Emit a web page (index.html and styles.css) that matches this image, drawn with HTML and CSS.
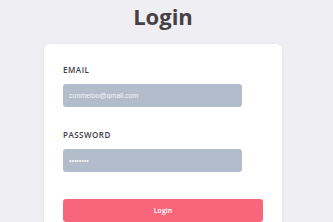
FILE: index.html
```html
<!DOCTYPE html>
<html lang="en">
<head>
    <meta charset="UTF-8">
    <meta name="viewport" content="width=device-width, initial-scale=1.0">
    <title>Login</title>
    <link rel="stylesheet" href="styles.css">
</head>
<body>
    <h1 class="title">Login</h1>
    <form class="card">
        <label class="label" for="email">EMAIL</label>
        <input class="field" id="email" type="text" value="conmeloo@gmail.com">
        <label class="label" for="password">PASSWORD</label>
        <input class="field" id="password" type="password" value="password">
        <button class="submit" type="button">Login</button>
    </form>
</body>
</html>
```

FILE: styles.css
```css
body {
    font-family: 'Open Sans', sans-serif;
    margin: 0;
    padding-right: 7px;
    background-color: #efeef3;
    display: flex;
    flex-direction: column;
    align-items: center;
    overflow: hidden;
    height: 222px;
}
.title {
    flex-shrink: 0;
    font-size: 22px;
    font-weight: 700;
    color: #454045;
    margin: 2px 0 0;
    height: 42px;
    line-height: 28px;
}
.card {
    flex-shrink: 0;
    width: 200px;
    background-color: #fff;
    border-radius: 6px;
    padding: 20px 19px 40px;
    box-shadow: 0 1px 4px rgba(0, 0, 0, 0.06);
    display: flex;
    flex-direction: column;
}
.label {
    font-size: 8px;
    font-weight: 600;
    letter-spacing: 0.5px;
    color: #3d3d45;
    line-height: 12px;
    margin-bottom: 8px;
}
.field {
    box-sizing: border-box;
    width: 179px;
    height: 23px;
    border: none;
    border-radius: 3px;
    background-color: #b3bccb;
    color: #f4f5f8;
    font-family: 'Liberation Sans', sans-serif;
    font-size: 7px;
    padding: 0 6px;
    margin-bottom: 22px;
}
#password {
    margin-bottom: 27px;
}
.submit {
    height: 23px;
    border: none;
    border-radius: 3px;
    background-color: #f8667b;
    color: #fff;
    font-family: 'Open Sans', sans-serif;
    font-size: 7px;
    font-weight: 600;
}
```
